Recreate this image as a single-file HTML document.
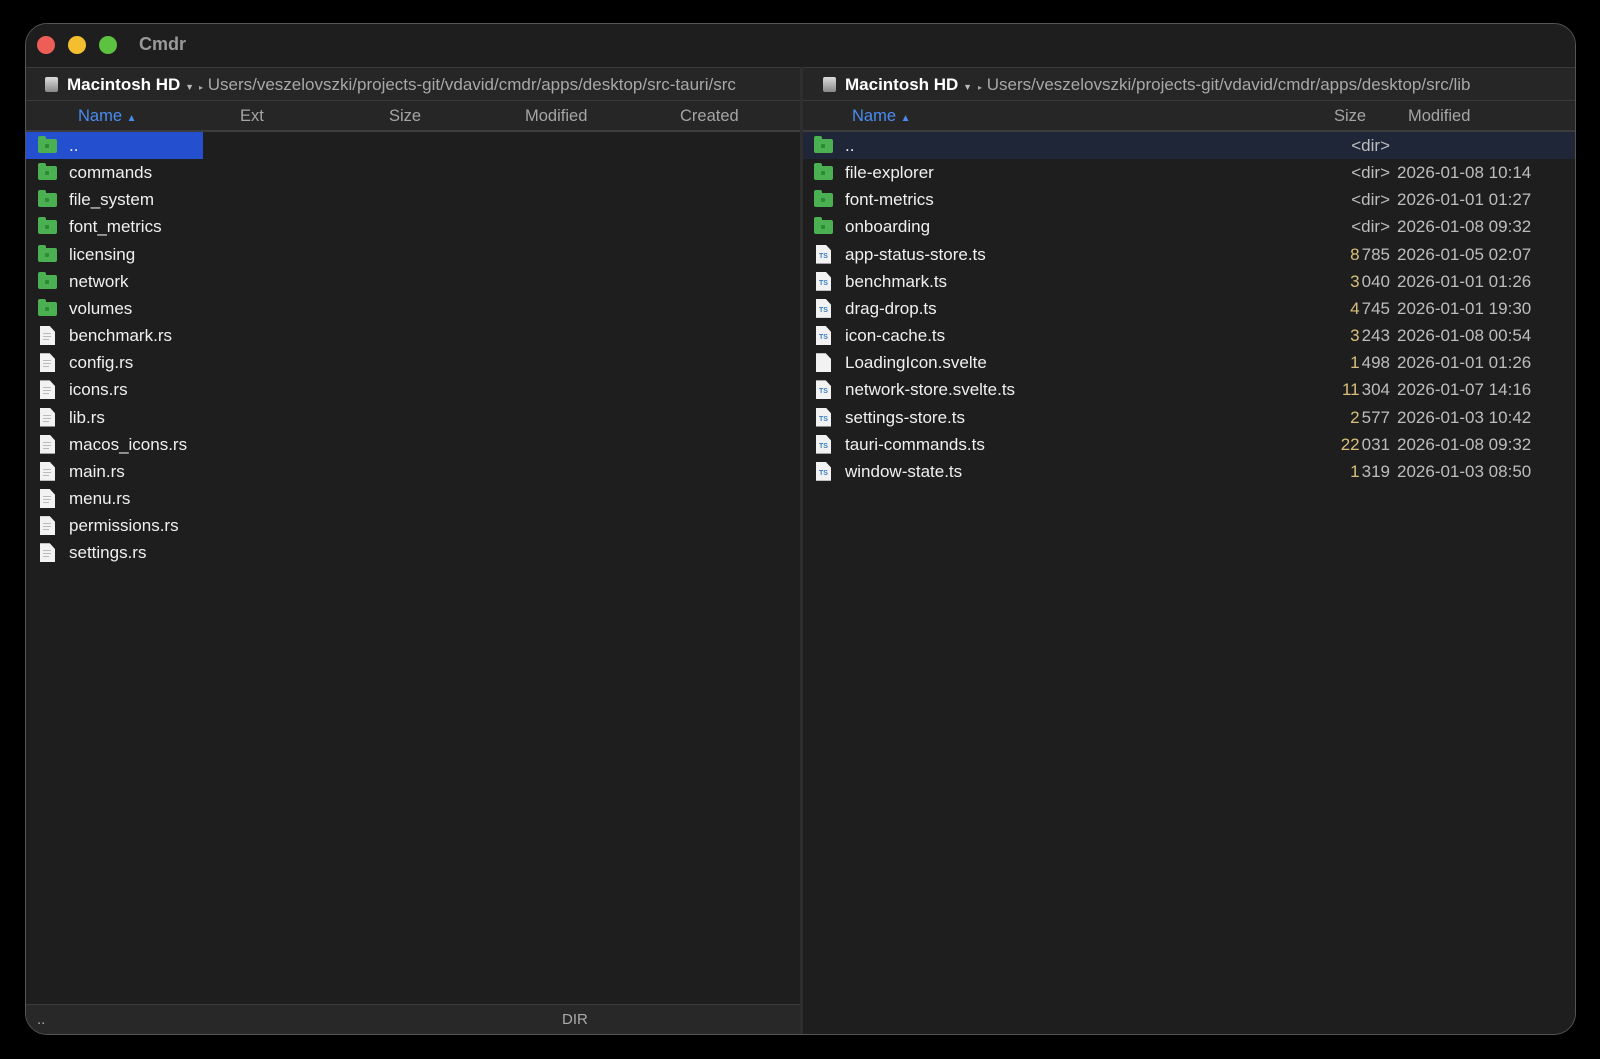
<!DOCTYPE html>
<html><head><meta charset="utf-8"><style>
*{margin:0;padding:0;box-sizing:border-box}
body{width:1600px;height:1059px;background:#000;font-family:"Liberation Sans",sans-serif;position:relative;overflow:hidden}
.win{position:absolute;left:25px;top:23px;width:1551px;height:1012px;background:#1e1e1e;border:1px solid #555;border-radius:22px;overflow:hidden}
.title{position:absolute;left:0;top:0;right:0;height:44px;background:#1e1e1e}
.dot{position:absolute;top:12px;width:18px;height:18px;border-radius:50%}
.t{position:absolute;left:113px;top:10px;color:#9a9a9a;font-weight:bold;font-size:18px}
.pane{position:absolute;top:43px;bottom:0;background:#1e1e1e}
.pbar{position:absolute;left:0;right:0;top:0;height:34px;background:#262626;border-top:1px solid #3a3a3a;border-bottom:1px solid #3a3a3a}
.hd{position:absolute;left:0;right:0;top:34px;height:31px;background:#262626;border-bottom:2px solid #3c3c3c;color:#a5a5a5;font-size:16.5px}
.hd span{position:absolute;top:6px}
.blue{color:#4a8cf0}
.disk{position:absolute;top:9px;width:13px;height:15px;background:linear-gradient(#ddd,#888);border-radius:2px}
.dn{position:absolute;top:7px;color:#fff;font-size:17px;font-weight:bold}
.path{position:absolute;top:7px;color:#a8a8a8;font-size:17px;white-space:nowrap}
.row{position:absolute;left:0;right:0;height:27px;color:#f0f0f0;font-size:17px}
.row .n{position:absolute;top:4px}
.fold{position:absolute;top:7px;width:19px;height:14px;background:#4bb052;border-radius:2px}
.fold:before{content:"";position:absolute;left:0;top:-3px;width:8px;height:4px;background:#4bb052;border-radius:2px 2px 0 0}
.fold:after{content:"";position:absolute;left:7px;top:5px;width:4px;height:4px;background:#2f8a37;border-radius:1px}
.file{position:absolute;top:4px;width:15px;height:19px;background:#f2f2f2;clip-path:polygon(0 0,65% 0,100% 30%,100% 100%,0 100%)}
.file i{position:absolute;left:3px;height:1px;width:8px;background:#bbb}
.ts{font-size:7px;color:#3a7cc4;position:absolute;left:3px;top:8px;font-weight:bold}
.sz{position:absolute;top:4px;color:#bdbdbd;text-align:right}
.sz b{font-weight:normal;color:#d8c07a;margin-right:2px}
.dt{position:absolute;top:4px;color:#bdbdbd}
</style></head><body>
<div class="win">
 <div class="title">
  <div class="dot" style="left:11px;background:#ed5f56"></div>
  <div class="dot" style="left:42px;background:#f4bf2f"></div>
  <div class="dot" style="left:73px;background:#5cc23f"></div>
  <div class="t">Cmdr</div>
 </div>
 <div class="pane" style="left:0;width:774px">
  <div class="pbar">
   <div class="disk" style="left:19px"></div>
   <div class="dn" style="left:41px">Macintosh HD <span style="font-size:9px;color:#bbb">▼</span></div>
   <div class="path" style="left:173px"><span style="font-size:8px">▸</span> Users/veszelovszki/projects-git/vdavid/cmdr/apps/desktop/src-tauri/src</div>
  </div>
  <div class="hd">
   <span class="blue" style="left:52px">Name <span style="position:static;font-size:10px">▲</span></span>
   <span style="left:214px">Ext</span><span style="left:363px">Size</span><span style="left:499px">Modified</span><span style="left:654px">Created</span>
  </div>
  <div style="position:absolute;left:0;top:65px;width:177px;height:27px;background:#2450cf"></div>
  <div id="L"></div>
  <div style="position:absolute;left:0;right:0;bottom:0;height:30px;background:#282828;border-top:1px solid #3c3c3c;color:#aaa;font-size:15px">
   <span style="position:absolute;left:11px;top:6px">..</span><span style="position:absolute;left:536px;top:6px">DIR</span>
  </div>
 </div>
 <div style="position:absolute;left:774px;top:43px;bottom:0;width:3px;background:#2e2e2e"></div>
 <div class="pane" style="left:777px;right:0">
  <div class="pbar">
   <div class="disk" style="left:20px"></div>
   <div class="dn" style="left:42px">Macintosh HD <span style="font-size:9px;color:#bbb">▼</span></div>
   <div class="path" style="left:175px"><span style="font-size:8px">▸</span> Users/veszelovszki/projects-git/vdavid/cmdr/apps/desktop/src/lib</div>
  </div>
  <div class="hd">
   <span class="blue" style="left:49px">Name <span style="position:static;font-size:10px">▲</span></span>
   <span style="left:531px">Size</span><span style="left:605px">Modified</span>
  </div>
  <div style="position:absolute;left:0;right:0;top:65px;height:27px;background:#1f2638"></div>
  <div id="R"></div>
 </div>
</div>
<script>
var L=[["..",1],["commands",1],["file_system",1],["font_metrics",1],["licensing",1],["network",1],["volumes",1],["benchmark.rs"],["config.rs"],["icons.rs"],["lib.rs"],["macos_icons.rs"],["main.rs"],["menu.rs"],["permissions.rs"],["settings.rs"]];
var h="";L.forEach(function(r,i){var y=65+i*27.15;h+='<div class="row" style="top:'+y+'px">'+(r[1]?'<div class="fold" style="left:12px"></div>':'<div class="file" style="left:14px"><i style="top:7px"></i><i style="top:10px"></i><i style="top:13px;width:6px"></i></div>')+'<span class="n" style="left:43px">'+r[0]+'</span></div>'});
document.getElementById("L").innerHTML=h;
var R=[["..",1,"","&lt;dir&gt;",""],["file-explorer",1,"","&lt;dir&gt;","2026-01-08 10:14"],["font-metrics",1,"","&lt;dir&gt;","2026-01-01 01:27"],["onboarding",1,"","&lt;dir&gt;","2026-01-08 09:32"],
["app-status-store.ts",2,"8","785","2026-01-05 02:07"],["benchmark.ts",2,"3","040","2026-01-01 01:26"],["drag-drop.ts",2,"4","745","2026-01-01 19:30"],["icon-cache.ts",2,"3","243","2026-01-08 00:54"],["LoadingIcon.svelte",0,"1","498","2026-01-01 01:26"],["network-store.svelte.ts",2,"11","304","2026-01-07 14:16"],["settings-store.ts",2,"2","577","2026-01-03 10:42"],["tauri-commands.ts",2,"22","031","2026-01-08 09:32"],["window-state.ts",2,"1","319","2026-01-03 08:50"]];
h="";R.forEach(function(r,i){var y=65+i*27.15;var ic=r[1]==1?'<div class="fold" style="left:11px"></div>':'<div class="file" style="left:13px">'+(r[1]==2?'<span class="ts">TS</span>':'')+'</div>';
h+='<div class="row" style="top:'+y+'px">'+ic+'<span class="n" style="left:42px">'+r[0]+'</span><span class="sz" style="right:185px">'+(r[2]?'<b>'+r[2]+'</b>':'')+r[3]+'</span><span class="dt" style="left:594px">'+r[4]+'</span></div>'});
document.getElementById("R").innerHTML=h;
</script>
</body></html>
